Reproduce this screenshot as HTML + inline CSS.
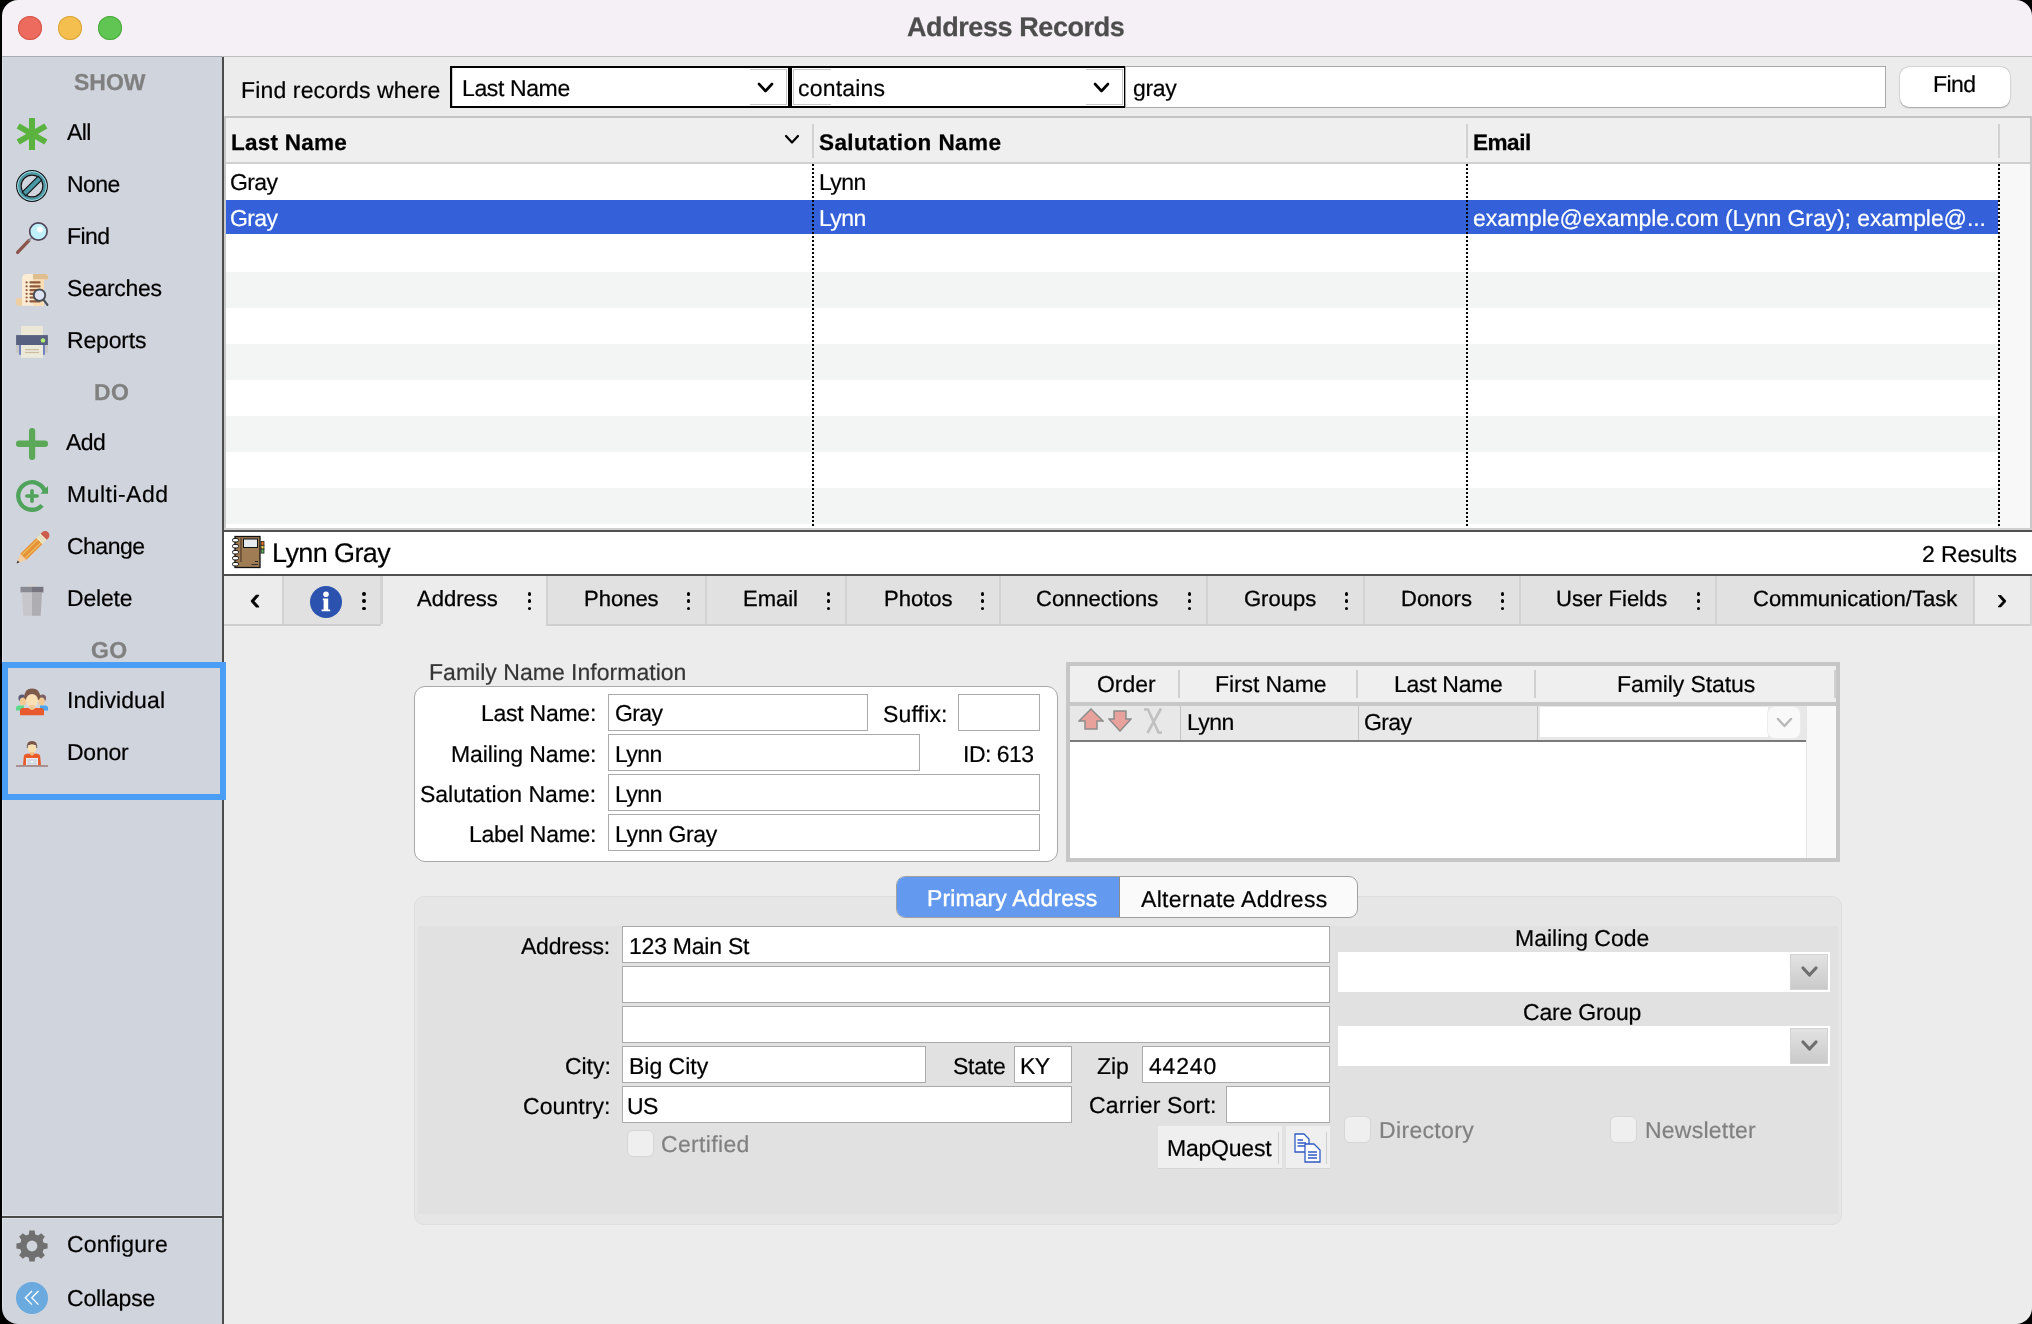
<!DOCTYPE html>
<html><head><meta charset="utf-8"><style>
html,body{margin:0;padding:0;}
body{width:2032px;height:1324px;background:#000;position:relative;overflow:hidden;font-family:"Liberation Sans",sans-serif;text-rendering:geometricPrecision;}
.t{position:absolute;white-space:pre;will-change:transform;}
.r{position:absolute;}
</style></head><body>
<div class="r" style="left:2px;top:0px;width:2030px;height:56px;background:#f5f0f6;border-radius:16px 16px 0 0;"></div>
<div class="r" style="left:2px;top:56px;width:220px;height:1px;background:#a6acb6;"></div>
<div class="r" style="left:222px;top:56px;width:1810px;height:1px;background:#bdbdbd;"></div>
<div class="r" style="left:18px;top:16px;width:24px;height:24px;background:#ed6a5e;border-radius:50%;box-shadow:inset 0 0 0 1px #d4574b;"></div>
<div class="r" style="left:58px;top:16px;width:24px;height:24px;background:#f4bf4f;border-radius:50%;box-shadow:inset 0 0 0 1px #d9a53a;"></div>
<div class="r" style="left:98px;top:16px;width:24px;height:24px;background:#61c554;border-radius:50%;box-shadow:inset 0 0 0 1px #4ea93f;"></div>
<div class="t" style="left:907.20px;top:14px;font-size:27px;line-height:27px;font-weight:700;color:#4d4d4d;letter-spacing:-0.413px;-webkit-text-stroke:0.25px #4d4d4d;">Address Records</div>
<div class="r" style="left:2px;top:57px;width:220px;height:1267px;background:#d0d4dd;border-radius:0 0 0 16px;"></div>
<div class="r" style="left:222px;top:57px;width:2px;height:1267px;background:#4b4b4b;"></div>
<div class="r" style="left:224px;top:57px;width:1808px;height:1267px;background:#ececec;border-radius:0 0 16px 0;"></div>
<div class="t" style="left:73.62px;top:71px;font-size:23px;line-height:23px;font-weight:700;color:#808080;letter-spacing:0.000px;-webkit-text-stroke:0.25px #808080;">SHOW</div>
<div class="t" style="left:93.60px;top:381px;font-size:23px;line-height:23px;font-weight:700;color:#808080;letter-spacing:0.300px;-webkit-text-stroke:0.25px #808080;">DO</div>
<div class="t" style="left:90.96px;top:639px;font-size:23px;line-height:23px;font-weight:700;color:#808080;letter-spacing:0.300px;-webkit-text-stroke:0.25px #808080;">GO</div>
<div class="t" style="left:66.62px;top:121px;font-size:23px;line-height:23px;font-weight:400;color:#000;letter-spacing:-0.600px;-webkit-text-stroke:0.20px #000;">All</div>
<div class="t" style="left:66.71px;top:173px;font-size:23px;line-height:23px;font-weight:400;color:#000;letter-spacing:-0.600px;-webkit-text-stroke:0.20px #000;">None</div>
<div class="t" style="left:66.88px;top:225px;font-size:23px;line-height:23px;font-weight:400;color:#000;letter-spacing:-0.600px;-webkit-text-stroke:0.20px #000;">Find</div>
<div class="t" style="left:67.00px;top:277px;font-size:23px;line-height:23px;font-weight:400;color:#000;letter-spacing:-0.310px;-webkit-text-stroke:0.20px #000;">Searches</div>
<div class="t" style="left:67.00px;top:329px;font-size:23px;line-height:23px;font-weight:400;color:#000;letter-spacing:-0.188px;-webkit-text-stroke:0.20px #000;">Reports</div>
<div class="t" style="left:66.49px;top:431px;font-size:23px;line-height:23px;font-weight:400;color:#000;letter-spacing:-0.600px;-webkit-text-stroke:0.20px #000;">Add</div>
<div class="t" style="left:67.00px;top:483px;font-size:23px;line-height:23px;font-weight:400;color:#000;letter-spacing:0.482px;-webkit-text-stroke:0.20px #000;">Multi-Add</div>
<div class="t" style="left:67.00px;top:535px;font-size:23px;line-height:23px;font-weight:400;color:#000;letter-spacing:-0.514px;-webkit-text-stroke:0.20px #000;">Change</div>
<div class="t" style="left:67.00px;top:587px;font-size:23px;line-height:23px;font-weight:400;color:#000;letter-spacing:-0.176px;-webkit-text-stroke:0.20px #000;">Delete</div>
<div class="t" style="left:67.00px;top:689px;font-size:23px;line-height:23px;font-weight:400;color:#000;letter-spacing:0.091px;-webkit-text-stroke:0.20px #000;">Individual</div>
<div class="t" style="left:67.00px;top:741px;font-size:23px;line-height:23px;font-weight:400;color:#000;letter-spacing:-0.235px;-webkit-text-stroke:0.20px #000;">Donor</div>
<div class="t" style="left:67.00px;top:1233px;font-size:23px;line-height:23px;font-weight:400;color:#000;letter-spacing:0.121px;-webkit-text-stroke:0.20px #000;">Configure</div>
<div class="t" style="left:67.00px;top:1287px;font-size:23px;line-height:23px;font-weight:400;color:#000;letter-spacing:-0.171px;-webkit-text-stroke:0.20px #000;">Collapse</div>
<div class="r" style="left:2px;top:57px;width:1px;height:1250px;background:#dde1e8;"></div>
<div class="r" style="left:3px;top:1215px;width:219px;height:1px;background:#dde1e8;"></div>
<div class="r" style="left:3px;top:1218px;width:219px;height:1px;background:#dde1e8;"></div>
<div class="r" style="left:2px;top:1216px;width:220px;height:2px;background:#4a4a48;"></div>
<div class="r" style="left:2px;top:662px;width:224px;height:138px;box-sizing:border-box;border:6px solid #4a9ef6;"></div>
<div class="t" style="left:240.70px;top:79px;font-size:23px;line-height:23px;font-weight:400;color:#000;letter-spacing:0.144px;-webkit-text-stroke:0.20px #000;">Find records where</div>
<div class="r" style="left:450px;top:66px;width:340px;height:42px;box-sizing:border-box;border:2px solid #000;background:#fff;"></div>
<div class="r" style="left:452px;top:68px;width:1px;height:38px;background:#cfcfcf;"></div>
<div class="r" style="left:750px;top:69px;width:37px;height:36px;box-sizing:border-box;border:1px solid #c8c8c8;border-left:none;"></div>
<div class="r" style="left:790px;top:66px;width:336px;height:42px;box-sizing:border-box;border:2px solid #000;background:#fff;"></div>
<div class="r" style="left:793px;top:69px;width:38px;height:36px;box-sizing:border-box;border-left:1px solid #c8c8c8;border-top:1px solid #c8c8c8;border-bottom:1px solid #c8c8c8;"></div>
<div class="r" style="left:1086px;top:69px;width:37px;height:36px;box-sizing:border-box;border:1px solid #c8c8c8;border-left:none;"></div>
<div class="t" style="left:461.70px;top:77px;font-size:23px;line-height:23px;font-weight:400;color:#000;letter-spacing:-0.378px;-webkit-text-stroke:0.20px #000;">Last Name</div>
<div class="t" style="left:798.30px;top:77px;font-size:23px;line-height:23px;font-weight:400;color:#000;letter-spacing:0.204px;-webkit-text-stroke:0.20px #000;">contains</div>
<div class="r" style="left:1125px;top:66px;width:761px;height:42px;box-sizing:border-box;border:1px solid #a8a8a8;background:#fff;"></div>
<div class="t" style="left:1132.80px;top:77px;font-size:23px;line-height:23px;font-weight:400;color:#000;letter-spacing:-0.347px;-webkit-text-stroke:0.20px #000;">gray</div>
<svg class="r" style="left:755.5px;top:80.5px" width="19.0" height="13.0"><polyline points="3,3 9.5,10.0 16.0,3" fill="none" stroke="#000" stroke-width="2.6" stroke-linecap="round" stroke-linejoin="round"/></svg>
<svg class="r" style="left:1091.5px;top:80.5px" width="19.0" height="13.0"><polyline points="3,3 9.5,10.0 16.0,3" fill="none" stroke="#000" stroke-width="2.6" stroke-linecap="round" stroke-linejoin="round"/></svg>
<div class="r" style="left:1900px;top:67px;width:110px;height:40px;background:#fff;border-radius:9px;box-shadow:0 0 0 0.5px rgba(0,0,0,0.10), 0 0.5px 1.5px rgba(0,0,0,0.28);"></div>
<div class="t" style="left:1932.98px;top:73px;font-size:23px;line-height:23px;font-weight:400;color:#000;letter-spacing:-0.600px;-webkit-text-stroke:0.20px #000;">Find</div>
<div class="r" style="left:224px;top:116px;width:1808px;height:2px;background:#c4c4c4;"></div>
<div class="r" style="left:224px;top:118px;width:1806px;height:412px;background:#fff;"></div>
<div class="r" style="left:224px;top:118px;width:2px;height:412px;background:#c8c8c8;"></div>
<div class="r" style="left:2030px;top:118px;width:2px;height:412px;background:#c8c8c8;"></div>
<div class="r" style="left:226px;top:118px;width:1804px;height:44px;background:#efefef;"></div>
<div class="r" style="left:226px;top:162px;width:1804px;height:2px;background:#d0d0d0;"></div>
<div class="r" style="left:226px;top:272px;width:1772px;height:36px;background:#f3f4f4;"></div>
<div class="r" style="left:226px;top:344px;width:1772px;height:36px;background:#f3f4f4;"></div>
<div class="r" style="left:226px;top:416px;width:1772px;height:36px;background:#f3f4f4;"></div>
<div class="r" style="left:226px;top:488px;width:1772px;height:36px;background:#f3f4f4;"></div>
<div class="r" style="left:1998px;top:164px;width:32px;height:364px;background:#f8f8f8;border-left:1px solid #ececec;box-sizing:border-box;"></div>
<div class="r" style="left:226px;top:200px;width:1772px;height:34px;background:#3461d9;"></div>
<div class="r" style="left:812px;top:124px;width:2px;height:34px;background:#d2d2d2;"></div>
<div class="r" style="left:1466px;top:124px;width:2px;height:34px;background:#d2d2d2;"></div>
<div class="r" style="left:1998px;top:124px;width:2px;height:34px;background:#d2d2d2;"></div>
<svg class="r" style="left:783px;top:132.5px" width="18" height="12.5"><polyline points="3,3 9.0,9.5 15,3" fill="none" stroke="#000" stroke-width="2.2" stroke-linecap="round" stroke-linejoin="round"/></svg>
<div class="t" style="left:231.30px;top:132px;font-size:22.5px;line-height:22.5px;font-weight:700;color:#000;letter-spacing:0.237px;-webkit-text-stroke:0.25px #000;">Last Name</div>
<div class="t" style="left:818.90px;top:132px;font-size:22.5px;line-height:22.5px;font-weight:700;color:#000;letter-spacing:0.401px;-webkit-text-stroke:0.25px #000;">Salutation Name</div>
<div class="t" style="left:1472.70px;top:132px;font-size:22.5px;line-height:22.5px;font-weight:700;color:#000;letter-spacing:-0.457px;-webkit-text-stroke:0.25px #000;">Email</div>
<div class="r" style="left:812px;top:164px;width:2px;height:364px;background-image:repeating-linear-gradient(to bottom,#000 0,#000 2px,transparent 2px,transparent 4px);"></div>
<div class="r" style="left:1466px;top:164px;width:2px;height:364px;background-image:repeating-linear-gradient(to bottom,#000 0,#000 2px,transparent 2px,transparent 4px);"></div>
<div class="r" style="left:1998px;top:164px;width:2px;height:364px;background-image:repeating-linear-gradient(to bottom,#000 0,#000 2px,transparent 2px,transparent 4px);"></div>
<div class="t" style="left:230.28px;top:171px;font-size:23px;line-height:23px;font-weight:400;color:#000;letter-spacing:-0.600px;-webkit-text-stroke:0.20px #000;">Gray</div>
<div class="t" style="left:818.99px;top:171px;font-size:23px;line-height:23px;font-weight:400;color:#000;letter-spacing:-0.600px;-webkit-text-stroke:0.20px #000;">Lynn</div>
<div class="t" style="left:230.28px;top:207px;font-size:23px;line-height:23px;font-weight:400;color:#fff;letter-spacing:-0.600px;-webkit-text-stroke:0.20px #fff;">Gray</div>
<div class="t" style="left:818.99px;top:207px;font-size:23px;line-height:23px;font-weight:400;color:#fff;letter-spacing:-0.600px;-webkit-text-stroke:0.20px #fff;">Lynn</div>
<div class="t" style="left:1472.70px;top:207px;font-size:23px;line-height:23px;font-weight:400;color:#fff;letter-spacing:-0.078px;-webkit-text-stroke:0.20px #fff;">example@example.com (Lynn Gray); example@...</div>
<div class="r" style="left:224px;top:528px;width:1808px;height:2px;background:#d0d0d0;"></div>
<div class="r" style="left:224px;top:530px;width:1808px;height:2px;background:#505050;"></div>
<div class="r" style="left:224px;top:532px;width:1808px;height:42px;background:#fff;"></div>
<div class="r" style="left:224px;top:574px;width:1808px;height:2px;background:#505050;"></div>
<div class="t" style="left:272.27px;top:540px;font-size:27px;line-height:27px;font-weight:400;color:#000;letter-spacing:-0.600px;-webkit-text-stroke:0.20px #000;">Lynn Gray</div>
<div class="t" style="left:1922.40px;top:543px;font-size:23px;line-height:23px;font-weight:400;color:#000;letter-spacing:-0.121px;-webkit-text-stroke:0.20px #000;">2 Results</div>
<div class="r" style="left:224px;top:576px;width:1808px;height:48px;background:#e1e1e1;"></div>
<div class="r" style="left:224px;top:576px;width:58px;height:48px;background:#ececec;"></div>
<div class="r" style="left:224px;top:624px;width:1808px;height:2px;background:#cfcfcf;"></div>
<div class="r" style="left:2030px;top:576px;width:2px;height:50px;background:#d4d4d4;"></div>
<div class="r" style="left:282px;top:576px;width:2px;height:48px;background:#d2d2d2;"></div>
<div class="r" style="left:380px;top:576px;width:2px;height:48px;background:#d2d2d2;"></div>
<div class="r" style="left:1973px;top:576px;width:2px;height:48px;background:#d2d2d2;"></div>
<div class="r" style="left:1975px;top:576px;width:55px;height:48px;background:#ececec;"></div>
<div class="r" style="left:381px;top:576px;width:165px;height:50px;background:#ececec;"></div>
<div class="r" style="left:381px;top:576px;width:2px;height:48px;background:#d2d2d2;"></div>
<div class="t" style="left:417.40px;top:588px;font-size:22px;line-height:22px;font-weight:400;color:#000;letter-spacing:0.000px;-webkit-text-stroke:0.30px #000;">Address</div>
<div class="r" style="left:527.6px;top:592.1px;width:3.8px;height:3.8px;background:#000;border-radius:50%;"></div>
<div class="r" style="left:527.6px;top:599.4px;width:3.8px;height:3.8px;background:#000;border-radius:50%;"></div>
<div class="r" style="left:527.6px;top:606.6px;width:3.8px;height:3.8px;background:#000;border-radius:50%;"></div>
<div class="r" style="left:546px;top:576px;width:2px;height:48px;background:#d2d2d2;"></div>
<div class="t" style="left:583.60px;top:588px;font-size:22px;line-height:22px;font-weight:400;color:#000;letter-spacing:0.000px;-webkit-text-stroke:0.30px #000;">Phones</div>
<div class="r" style="left:686.6px;top:592.1px;width:3.8px;height:3.8px;background:#000;border-radius:50%;"></div>
<div class="r" style="left:686.6px;top:599.4px;width:3.8px;height:3.8px;background:#000;border-radius:50%;"></div>
<div class="r" style="left:686.6px;top:606.6px;width:3.8px;height:3.8px;background:#000;border-radius:50%;"></div>
<div class="r" style="left:705px;top:576px;width:2px;height:48px;background:#d2d2d2;"></div>
<div class="t" style="left:743.30px;top:588px;font-size:22px;line-height:22px;font-weight:400;color:#000;letter-spacing:0.000px;-webkit-text-stroke:0.30px #000;">Email</div>
<div class="r" style="left:826.6px;top:592.1px;width:3.8px;height:3.8px;background:#000;border-radius:50%;"></div>
<div class="r" style="left:826.6px;top:599.4px;width:3.8px;height:3.8px;background:#000;border-radius:50%;"></div>
<div class="r" style="left:826.6px;top:606.6px;width:3.8px;height:3.8px;background:#000;border-radius:50%;"></div>
<div class="r" style="left:845px;top:576px;width:2px;height:48px;background:#d2d2d2;"></div>
<div class="t" style="left:883.50px;top:588px;font-size:22px;line-height:22px;font-weight:400;color:#000;letter-spacing:0.000px;-webkit-text-stroke:0.30px #000;">Photos</div>
<div class="r" style="left:980.6px;top:592.1px;width:3.8px;height:3.8px;background:#000;border-radius:50%;"></div>
<div class="r" style="left:980.6px;top:599.4px;width:3.8px;height:3.8px;background:#000;border-radius:50%;"></div>
<div class="r" style="left:980.6px;top:606.6px;width:3.8px;height:3.8px;background:#000;border-radius:50%;"></div>
<div class="r" style="left:999px;top:576px;width:2px;height:48px;background:#d2d2d2;"></div>
<div class="t" style="left:1036.40px;top:588px;font-size:22px;line-height:22px;font-weight:400;color:#000;letter-spacing:0.000px;-webkit-text-stroke:0.30px #000;">Connections</div>
<div class="r" style="left:1187.6px;top:592.1px;width:3.8px;height:3.8px;background:#000;border-radius:50%;"></div>
<div class="r" style="left:1187.6px;top:599.4px;width:3.8px;height:3.8px;background:#000;border-radius:50%;"></div>
<div class="r" style="left:1187.6px;top:606.6px;width:3.8px;height:3.8px;background:#000;border-radius:50%;"></div>
<div class="r" style="left:1206px;top:576px;width:2px;height:48px;background:#d2d2d2;"></div>
<div class="t" style="left:1243.90px;top:588px;font-size:22px;line-height:22px;font-weight:400;color:#000;letter-spacing:0.000px;-webkit-text-stroke:0.30px #000;">Groups</div>
<div class="r" style="left:1344.6px;top:592.1px;width:3.8px;height:3.8px;background:#000;border-radius:50%;"></div>
<div class="r" style="left:1344.6px;top:599.4px;width:3.8px;height:3.8px;background:#000;border-radius:50%;"></div>
<div class="r" style="left:1344.6px;top:606.6px;width:3.8px;height:3.8px;background:#000;border-radius:50%;"></div>
<div class="r" style="left:1363px;top:576px;width:2px;height:48px;background:#d2d2d2;"></div>
<div class="t" style="left:1400.90px;top:588px;font-size:22px;line-height:22px;font-weight:400;color:#000;letter-spacing:0.000px;-webkit-text-stroke:0.30px #000;">Donors</div>
<div class="r" style="left:1500.6px;top:592.1px;width:3.8px;height:3.8px;background:#000;border-radius:50%;"></div>
<div class="r" style="left:1500.6px;top:599.4px;width:3.8px;height:3.8px;background:#000;border-radius:50%;"></div>
<div class="r" style="left:1500.6px;top:606.6px;width:3.8px;height:3.8px;background:#000;border-radius:50%;"></div>
<div class="r" style="left:1519px;top:576px;width:2px;height:48px;background:#d2d2d2;"></div>
<div class="t" style="left:1555.50px;top:588px;font-size:22px;line-height:22px;font-weight:400;color:#000;letter-spacing:0.000px;-webkit-text-stroke:0.30px #000;">User Fields</div>
<div class="r" style="left:1696.6px;top:592.1px;width:3.8px;height:3.8px;background:#000;border-radius:50%;"></div>
<div class="r" style="left:1696.6px;top:599.4px;width:3.8px;height:3.8px;background:#000;border-radius:50%;"></div>
<div class="r" style="left:1696.6px;top:606.6px;width:3.8px;height:3.8px;background:#000;border-radius:50%;"></div>
<div class="r" style="left:1715px;top:576px;width:2px;height:48px;background:#d2d2d2;"></div>
<div class="t" style="left:1752.60px;top:588px;font-size:22px;line-height:22px;font-weight:400;color:#000;letter-spacing:0.000px;-webkit-text-stroke:0.30px #000;">Communication/Task</div>
<div class="r" style="left:362.1px;top:592.1px;width:3.8px;height:3.8px;background:#000;border-radius:50%;"></div>
<div class="r" style="left:362.1px;top:599.4px;width:3.8px;height:3.8px;background:#000;border-radius:50%;"></div>
<div class="r" style="left:362.1px;top:606.6px;width:3.8px;height:3.8px;background:#000;border-radius:50%;"></div>
<div class="t" style="left:250.00px;top:585px;font-size:30px;line-height:30px;font-weight:400;color:#000;letter-spacing:0.000px;-webkit-text-stroke:0.90px #000;">‹</div>
<div class="t" style="left:1997.40px;top:585px;font-size:30px;line-height:30px;font-weight:400;color:#000;letter-spacing:0.000px;-webkit-text-stroke:0.70px #000;">›</div>
<svg class="r" style="left:310px;top:586px" width="32" height="32"><circle cx="16" cy="16" r="16" fill="#2a52ae"/><circle cx="16" cy="8.3" r="2.8" fill="#fff"/><path d="M12.8 12.5 H18.2 V23.5 H20.2 V25.3 H11.6 V23.5 H13.6 V14.3 H12.8 Z" fill="#fff"/></svg>
<div class="t" style="left:429.40px;top:661px;font-size:23px;line-height:23px;font-weight:400;color:#353535;letter-spacing:0.022px;-webkit-text-stroke:0.20px #353535;">Family Name Information</div>
<div class="r" style="left:414px;top:686px;width:644px;height:176px;box-sizing:border-box;border:1px solid #a9a9a9;border-radius:11px;background:#fff;"></div>
<div class="r" style="left:608px;top:694px;width:260px;height:37px;box-sizing:border-box;border:1px solid #aaaaaa;background:#fff;"></div>
<div class="r" style="left:958px;top:694px;width:82px;height:37px;box-sizing:border-box;border:1px solid #aaaaaa;background:#fff;"></div>
<div class="r" style="left:608px;top:734px;width:312px;height:37px;box-sizing:border-box;border:1px solid #aaaaaa;background:#fff;"></div>
<div class="r" style="left:608px;top:774px;width:432px;height:37px;box-sizing:border-box;border:1px solid #aaaaaa;background:#fff;"></div>
<div class="r" style="left:608px;top:814px;width:432px;height:37px;box-sizing:border-box;border:1px solid #aaaaaa;background:#fff;"></div>
<div class="t" style="left:481.30px;top:702px;font-size:23px;line-height:23px;font-weight:400;color:#000;letter-spacing:-0.257px;-webkit-text-stroke:0.20px #000;">Last Name:</div>
<div class="t" style="left:451.10px;top:743px;font-size:23px;line-height:23px;font-weight:400;color:#000;letter-spacing:-0.125px;-webkit-text-stroke:0.20px #000;">Mailing Name:</div>
<div class="t" style="left:420.40px;top:783px;font-size:23px;line-height:23px;font-weight:400;color:#000;letter-spacing:-0.015px;-webkit-text-stroke:0.20px #000;">Salutation Name:</div>
<div class="t" style="left:469.20px;top:823px;font-size:23px;line-height:23px;font-weight:400;color:#000;letter-spacing:-0.301px;-webkit-text-stroke:0.20px #000;">Label Name:</div>
<div class="t" style="left:614.53px;top:702px;font-size:23px;line-height:23px;font-weight:400;color:#000;letter-spacing:-0.600px;-webkit-text-stroke:0.20px #000;">Gray</div>
<div class="t" style="left:614.94px;top:743px;font-size:23px;line-height:23px;font-weight:400;color:#000;letter-spacing:-0.600px;-webkit-text-stroke:0.20px #000;">Lynn</div>
<div class="t" style="left:614.94px;top:783px;font-size:23px;line-height:23px;font-weight:400;color:#000;letter-spacing:-0.600px;-webkit-text-stroke:0.20px #000;">Lynn</div>
<div class="t" style="left:615.00px;top:823px;font-size:23px;line-height:23px;font-weight:400;color:#000;letter-spacing:-0.381px;-webkit-text-stroke:0.20px #000;">Lynn Gray</div>
<div class="t" style="left:883.00px;top:703px;font-size:23px;line-height:23px;font-weight:400;color:#000;letter-spacing:0.167px;-webkit-text-stroke:0.20px #000;">Suffix:</div>
<div class="t" style="left:963.30px;top:743px;font-size:23px;line-height:23px;font-weight:400;color:#000;letter-spacing:-0.510px;-webkit-text-stroke:0.20px #000;">ID: 613</div>
<div class="r" style="left:1066px;top:662px;width:774px;height:200px;box-sizing:border-box;border:4px solid #c6c6c6;background:#fff;"></div>
<div class="r" style="left:1070px;top:666px;width:766px;height:36px;background:#efefef;"></div>
<div class="r" style="left:1070px;top:702px;width:766px;height:4px;background:#c8c8c8;"></div>
<div class="r" style="left:1070px;top:706px;width:736px;height:34px;background:#e8e8e8;"></div>
<div class="r" style="left:1070px;top:740px;width:736px;height:2px;background:#7a7a7a;"></div>
<div class="r" style="left:1806px;top:706px;width:30px;height:152px;background:#f8f8f8;border-left:1px solid #e6e6e6;box-sizing:border-box;"></div>
<div class="r" style="left:1178px;top:670px;width:2px;height:28px;background:#d0d0d0;"></div>
<div class="r" style="left:1356px;top:670px;width:2px;height:28px;background:#d0d0d0;"></div>
<div class="r" style="left:1534px;top:670px;width:2px;height:28px;background:#d0d0d0;"></div>
<div class="r" style="left:1834px;top:670px;width:2px;height:28px;background:#d0d0d0;"></div>
<div class="r" style="left:1180px;top:706px;width:1px;height:34px;background:#c4c4c4;"></div>
<div class="r" style="left:1358px;top:706px;width:1px;height:34px;background:#c4c4c4;"></div>
<div class="r" style="left:1537px;top:706px;width:1px;height:34px;background:#c4c4c4;"></div>
<div class="t" style="left:1096.90px;top:673px;font-size:23px;line-height:23px;font-weight:400;color:#000;letter-spacing:-0.048px;-webkit-text-stroke:0.20px #000;">Order</div>
<div class="t" style="left:1214.70px;top:673px;font-size:23px;line-height:23px;font-weight:400;color:#000;letter-spacing:-0.094px;-webkit-text-stroke:0.20px #000;">First Name</div>
<div class="t" style="left:1393.60px;top:673px;font-size:23px;line-height:23px;font-weight:400;color:#000;letter-spacing:-0.302px;-webkit-text-stroke:0.20px #000;">Last Name</div>
<div class="t" style="left:1616.80px;top:673px;font-size:23px;line-height:23px;font-weight:400;color:#000;letter-spacing:-0.092px;-webkit-text-stroke:0.20px #000;">Family Status</div>
<div class="t" style="left:1187.24px;top:711px;font-size:23px;line-height:23px;font-weight:400;color:#000;letter-spacing:-0.600px;-webkit-text-stroke:0.20px #000;">Lynn</div>
<div class="t" style="left:1364.38px;top:711px;font-size:23px;line-height:23px;font-weight:400;color:#000;letter-spacing:-0.600px;-webkit-text-stroke:0.20px #000;">Gray</div>
<div class="r" style="left:1540px;top:707px;width:228px;height:30px;background:#fff;"></div>
<div class="r" style="left:1768px;top:707px;width:32px;height:31px;background:#f9f9f9;border-radius:7px;box-shadow:0 0 0 1px #ececec;"></div>
<svg class="r" style="left:1774.5px;top:716px" width="19.0" height="13"><polyline points="3,3 9.5,10 16.0,3" fill="none" stroke="#b8b8b8" stroke-width="2.4" stroke-linecap="round" stroke-linejoin="round"/></svg>
<svg class="r" style="left:1078px;top:708px" width="26" height="22"><path d="M13 1 L25 13 L19 13 L19 21 L7 21 L7 13 L1 13 Z" fill="#e8a19b" stroke="#8c8c8c" stroke-width="1.5"/></svg>
<svg class="r" style="left:1108px;top:710px" width="24" height="22"><path d="M6 1 L18 1 L18 9 L23 9 L12 21 L1 9 L6 9 Z" fill="#e8a19b" stroke="#8c8c8c" stroke-width="1.5"/></svg>
<svg class="r" style="left:1142px;top:706px" width="24" height="30"><path d="M2 3.5 H6 L16.5 26.5 H20 M19 2.5 L5.5 27" fill="none" stroke="#c0c0c0" stroke-width="2.6"/></svg>
<div class="r" style="left:414px;top:896px;width:1428px;height:329px;box-sizing:border-box;border:1px solid #dedede;border-radius:10px;background:#e6e6e6;"></div>
<div class="r" style="left:418px;top:926px;width:1420px;height:288px;background:#e1e1e1;"></div>
<div class="r" style="left:896px;top:876px;width:462px;height:42px;box-sizing:border-box;border:1px solid #a0a0a0;border-radius:9px;background:#fafafa;overflow:hidden;"></div>
<div class="r" style="left:897px;top:877px;width:222px;height:40px;background:#639af0;border-radius:8px 0 0 8px;"></div>
<div class="r" style="left:1119px;top:877px;width:1px;height:40px;background:#8a8a8a;"></div>
<div class="t" style="left:927.30px;top:887px;font-size:23px;line-height:23px;font-weight:400;color:#fff;letter-spacing:0.106px;-webkit-text-stroke:0.40px #fff;">Primary Address</div>
<div class="t" style="left:1140.70px;top:888px;font-size:23px;line-height:23px;font-weight:400;color:#000;letter-spacing:0.291px;-webkit-text-stroke:0.20px #000;">Alternate Address</div>
<div class="r" style="left:622px;top:926px;width:708px;height:37px;box-sizing:border-box;border:1px solid #aaaaaa;background:#fff;"></div>
<div class="r" style="left:622px;top:966px;width:708px;height:37px;box-sizing:border-box;border:1px solid #aaaaaa;background:#fff;"></div>
<div class="r" style="left:622px;top:1006px;width:708px;height:37px;box-sizing:border-box;border:1px solid #aaaaaa;background:#fff;"></div>
<div class="r" style="left:622px;top:1046px;width:304px;height:37px;box-sizing:border-box;border:1px solid #aaaaaa;background:#fff;"></div>
<div class="r" style="left:1014px;top:1046px;width:58px;height:37px;box-sizing:border-box;border:1px solid #aaaaaa;background:#fff;"></div>
<div class="r" style="left:1142px;top:1046px;width:188px;height:37px;box-sizing:border-box;border:1px solid #aaaaaa;background:#fff;"></div>
<div class="r" style="left:622px;top:1086px;width:450px;height:37px;box-sizing:border-box;border:1px solid #aaaaaa;background:#fff;"></div>
<div class="r" style="left:1226px;top:1086px;width:104px;height:37px;box-sizing:border-box;border:1px solid #aaaaaa;background:#fff;"></div>
<div class="t" style="left:521.30px;top:935px;font-size:23px;line-height:23px;font-weight:400;color:#000;letter-spacing:-0.223px;-webkit-text-stroke:0.20px #000;">Address:</div>
<div class="t" style="left:564.70px;top:1055px;font-size:23px;line-height:23px;font-weight:400;color:#000;letter-spacing:-0.050px;-webkit-text-stroke:0.20px #000;">City:</div>
<div class="t" style="left:523.00px;top:1095px;font-size:23px;line-height:23px;font-weight:400;color:#000;letter-spacing:0.083px;-webkit-text-stroke:0.20px #000;">Country:</div>
<div class="t" style="left:629.10px;top:935px;font-size:23px;line-height:23px;font-weight:400;color:#000;letter-spacing:-0.224px;-webkit-text-stroke:0.20px #000;">123 Main St</div>
<div class="t" style="left:629.10px;top:1055px;font-size:23px;line-height:23px;font-weight:400;color:#000;letter-spacing:-0.006px;-webkit-text-stroke:0.20px #000;">Big City</div>
<div class="t" style="left:1019.76px;top:1055px;font-size:23px;line-height:23px;font-weight:400;color:#000;letter-spacing:-0.600px;-webkit-text-stroke:0.20px #000;">KY</div>
<div class="t" style="left:1149.00px;top:1055px;font-size:23px;line-height:23px;font-weight:400;color:#000;letter-spacing:0.810px;-webkit-text-stroke:0.20px #000;">44240</div>
<div class="t" style="left:627.18px;top:1095px;font-size:23px;line-height:23px;font-weight:400;color:#000;letter-spacing:-0.600px;-webkit-text-stroke:0.20px #000;">US</div>
<div class="t" style="left:953.00px;top:1055px;font-size:23px;line-height:23px;font-weight:400;color:#000;letter-spacing:-0.250px;-webkit-text-stroke:0.20px #000;">State</div>
<div class="t" style="left:1097.00px;top:1055px;font-size:23px;line-height:23px;font-weight:400;color:#000;letter-spacing:-0.125px;-webkit-text-stroke:0.20px #000;">Zip</div>
<div class="t" style="left:1088.80px;top:1094px;font-size:23px;line-height:23px;font-weight:400;color:#000;letter-spacing:0.180px;-webkit-text-stroke:0.20px #000;">Carrier Sort:</div>
<div class="r" style="left:627px;top:1130px;width:27px;height:27px;box-sizing:border-box;border:1px solid #d6d6d6;border-radius:6px;background:#efefef;"></div>
<div class="t" style="left:660.80px;top:1133px;font-size:23px;line-height:23px;font-weight:400;color:#808080;letter-spacing:0.333px;-webkit-text-stroke:0.20px #808080;">Certified</div>
<div class="r" style="left:1344px;top:1116px;width:27px;height:27px;box-sizing:border-box;border:1px solid #d6d6d6;border-radius:6px;background:#efefef;"></div>
<div class="r" style="left:1610px;top:1116px;width:27px;height:27px;box-sizing:border-box;border:1px solid #d6d6d6;border-radius:6px;background:#efefef;"></div>
<div class="t" style="left:1379.10px;top:1119px;font-size:23px;line-height:23px;font-weight:400;color:#808080;letter-spacing:0.336px;-webkit-text-stroke:0.20px #808080;">Directory</div>
<div class="t" style="left:1645.30px;top:1119px;font-size:23px;line-height:23px;font-weight:400;color:#808080;letter-spacing:0.229px;-webkit-text-stroke:0.20px #808080;">Newsletter</div>
<div class="r" style="left:1158px;top:1126px;width:124px;height:43px;background:#efefef;border-bottom:1px solid #d4d4d4;box-sizing:border-box;"></div>
<div class="r" style="left:1278px;top:1132px;width:1px;height:32px;background:#cfcfcf;"></div>
<div class="t" style="left:1167.40px;top:1137px;font-size:23px;line-height:23px;font-weight:400;color:#000;letter-spacing:-0.216px;-webkit-text-stroke:0.20px #000;">MapQuest</div>
<div class="r" style="left:1286px;top:1126px;width:44px;height:43px;background:#efefef;border-bottom:1px solid #d4d4d4;box-sizing:border-box;"></div>
<div class="r" style="left:1326px;top:1132px;width:1px;height:32px;background:#cfcfcf;"></div>
<svg class="r" style="left:1294px;top:1133px" width="28" height="30"><path d="M1 1 H10 L15 6 V19 H1 Z" fill="#fff" stroke="#2f5bc4" stroke-width="1.3"/><path d="M3.5 7 H9 M3.5 10 H12 M3.5 13 H12" stroke="#2f5bc4" stroke-width="1.3"/><path d="M11 11 H20 L26 17 V29 H11 Z" fill="#fff" stroke="#2f5bc4" stroke-width="1.3"/><path d="M14 19 H23 M14 22 H23 M14 25 H23" stroke="#2f5bc4" stroke-width="1.3"/></svg>
<div class="t" style="left:1515.00px;top:927px;font-size:23px;line-height:23px;font-weight:400;color:#000;letter-spacing:0.015px;-webkit-text-stroke:0.20px #000;">Mailing Code</div>
<div class="t" style="left:1522.60px;top:1001px;font-size:23px;line-height:23px;font-weight:400;color:#000;letter-spacing:-0.208px;-webkit-text-stroke:0.20px #000;">Care Group</div>
<div class="r" style="left:1338px;top:952px;width:492px;height:40px;background:#fff;"></div>
<div class="r" style="left:1790px;top:954px;width:38px;height:36px;background:linear-gradient(#e3e3e3,#c9c9c9);box-shadow:inset 0 0 0 1px #d2d2d2;"></div>
<svg class="r" style="left:1799.5px;top:965px" width="19.0" height="13"><polyline points="3,3 9.5,10 16.0,3" fill="none" stroke="#6e6e6e" stroke-width="3.2" stroke-linecap="round" stroke-linejoin="round"/></svg>
<div class="r" style="left:1338px;top:1026px;width:492px;height:40px;background:#fff;"></div>
<div class="r" style="left:1790px;top:1028px;width:38px;height:36px;background:linear-gradient(#e3e3e3,#c9c9c9);box-shadow:inset 0 0 0 1px #d2d2d2;"></div>
<svg class="r" style="left:1799.5px;top:1039px" width="19.0" height="13"><polyline points="3,3 9.5,10 16.0,3" fill="none" stroke="#6e6e6e" stroke-width="3.2" stroke-linecap="round" stroke-linejoin="round"/></svg>
<svg class="r" style="left:12px;top:114px" width="40" height="40" viewBox="0 0 40 40"><rect x="-3" y="-16" width="6" height="32" fill="#5ab33e" transform="translate(20,20) rotate(0)"/><rect x="-3" y="-16" width="6" height="32" fill="#5ab33e" transform="translate(20,20) rotate(60)"/><rect x="-3" y="-16" width="6" height="32" fill="#5ab33e" transform="translate(20,20) rotate(120)"/></svg>
<svg class="r" style="left:12px;top:166px" width="40" height="40" viewBox="0 0 40 40"><circle cx="20" cy="20" r="15.3" fill="none" stroke="#101010" stroke-width="1.3"/><circle cx="20" cy="20" r="13.1" fill="none" stroke="#4a98a5" stroke-width="3.2"/><circle cx="20" cy="20" r="14.4" fill="none" stroke="#bff0f4" stroke-width="0.7"/><circle cx="20" cy="20" r="10.9" fill="none" stroke="#101010" stroke-width="1.2"/><rect x="-11.2" y="-2.6" width="22.4" height="5.2" fill="#4a98a5" stroke="#101010" stroke-width="1.1" transform="translate(20,20) rotate(-45)"/></svg>
<svg class="r" style="left:12px;top:216px" width="40" height="40" viewBox="0 0 40 40"><line x1="17.6" y1="252.4" x2="28.8" y2="240.6" stroke="#8a5548" stroke-width="3.3" stroke-linecap="round" transform="translate(-12,-216)"/><line x1="28.5" y1="240.9" x2="31.5" y2="237.8" stroke="#8c8c9a" stroke-width="1.4" transform="translate(-12,-216)"/><circle cx="26.4" cy="15.5" r="8.7" fill="#bfeff9" stroke="#50465a" stroke-width="1.7"/><circle cx="28" cy="13.6" r="3" fill="#fff"/></svg>
<svg class="r" style="left:12px;top:268px" width="40" height="40" viewBox="0 0 40 40"><path d="M10 11 Q10 6 15 6 L33 6 Q36 6 36 9 L36 11.6 L32 11.6 L32 37.8 L10 37.8 Z" fill="#fbebd3"/><path d="M21 6 L33 6 Q36 6 36 9 L36 11.6 L21 11.6 Z" fill="#dfbd8f"/><rect x="21" y="11.6" width="11" height="26.2" fill="#f9deb3"/><path d="M4 30.3 L10 30.3 L10 37.8 L7 37.8 Q4 37.8 4 34.8 Z" fill="#efcfa0"/><circle cx="14.6" cy="14.4" r="1.1" fill="#8e5a3f"/><rect x="17.4" y="13.3" width="11.2" height="2.2" rx="1" fill="#8e5a3f"/><circle cx="14.6" cy="18.3" r="1.1" fill="#8e5a3f"/><rect x="17.4" y="17.2" width="11.2" height="2.2" rx="1" fill="#8e5a3f"/><circle cx="14.6" cy="22.1" r="1.1" fill="#8e5a3f"/><rect x="17.4" y="21.0" width="11.2" height="2.2" rx="1" fill="#8e5a3f"/><circle cx="14.6" cy="25.8" r="1.1" fill="#8e5a3f"/><rect x="17.4" y="24.7" width="11.2" height="2.2" rx="1" fill="#8e5a3f"/><circle cx="14.6" cy="29.5" r="1.1" fill="#8e5a3f"/><rect x="17.4" y="28.4" width="11.2" height="2.2" rx="1" fill="#8e5a3f"/><circle cx="14.6" cy="33.3" r="1.1" fill="#8e5a3f"/><rect x="17.4" y="32.199999999999996" width="11.2" height="2.2" rx="1" fill="#8e5a3f"/><line x1="31.3" y1="31.3" x2="35.4" y2="36.8" stroke="#4a4e57" stroke-width="2.2" stroke-linecap="round"/><circle cx="27.5" cy="27.2" r="5.7" fill="#dde3f3" stroke="#4a4e57" stroke-width="1.9"/></svg>
<svg class="r" style="left:12px;top:320px" width="40" height="40" viewBox="0 0 40 40"><rect x="9.1" y="6" width="21.8" height="9.6" fill="#ebe8d8"/><rect x="4.1" y="15.1" width="31.8" height="9.9" fill="#576080"/><circle cx="31" cy="20.4" r="2.2" fill="#b5ef72"/><rect x="4.1" y="25" width="3" height="7.6" fill="#c8c9c4"/><rect x="33" y="25" width="3" height="7.6" fill="#c8c9c4"/><rect x="7" y="25" width="2" height="9.8" fill="#7080c0"/><rect x="31" y="25" width="2" height="9.8" fill="#7080c0"/><rect x="9.1" y="25" width="21.8" height="12.8" fill="#ecebdb"/><rect x="13" y="29" width="14" height="1.2" fill="#c9bfa0"/><rect x="13" y="31.9" width="14" height="1.2" fill="#c9bfa0"/></svg>
<svg class="r" style="left:12px;top:424px" width="40" height="40" viewBox="0 0 40 40"><rect x="4" y="16.5" width="32" height="6.4" rx="3" fill="#5aa858"/><rect x="17" y="4" width="6.2" height="32" rx="3" fill="#5aa858"/></svg>
<svg class="r" style="left:12px;top:474px" width="40" height="40" viewBox="0 0 40 40"><path d="M33.22 18.21 A13.75 13.75 0 1 0 30.06 31.38" fill="none" stroke="#4fa35a" stroke-width="4.3"/><path d="M28.3 19.7 L36 19.7 L36 12 Z" fill="#4fa35a"/><rect x="13" y="20.2" width="14" height="3.6" rx="1.8" fill="#4fa35a"/><rect x="18.2" y="15" width="3.6" height="14" rx="1.8" fill="#4fa35a"/></svg>
<svg class="r" style="left:12px;top:526px" width="40" height="40" viewBox="0 0 40 40"><g transform="translate(4.6,37.4) rotate(-44.53)"><path d="M0 0 L9.5 -4.3 L9.5 4.3 Z" fill="#f6cda0"/><path d="M0 0 L2.8 -1.3 L2.8 1.3 Z" fill="#2e2e36"/><rect x="9.5" y="-4.3" width="22.5" height="8.6" fill="#e8913b"/><path d="M9.5 -2.2 L32 -2.2 M9.5 2.2 L32 2.2" stroke="#e7c55a" stroke-width="1.1"/><rect x="32" y="-4.3" width="6" height="8.6" fill="#efeac4"/><path d="M34 -4.3 L34 4.3 M36 -4.3 L36 4.3" stroke="#c9c9c0" stroke-width="0.8"/><path d="M38 -4.3 L40 -4.3 A4.3 4.3 0 0 1 40 4.3 L38 4.3 Z" fill="#cd5c4a"/></g></svg>
<svg class="r" style="left:12px;top:578px" width="40" height="40" viewBox="0 0 40 40"><rect x="15.7" y="6" width="8.8" height="2.8" fill="#d4d4d6"/><rect x="8.5" y="8.8" width="11.5" height="5.7" fill="#8a8a92"/><rect x="20" y="8.8" width="11.4" height="5.7" fill="#76757f"/><path d="M10 14.5 L20 14.5 L20 37.8 L11.3 37.8 Z" fill="#c7c6cb"/><path d="M20 14.5 L30 14.5 L28.7 37.8 L20 37.8 Z" fill="#aeadb2"/></svg>
<svg class="r" style="left:0px;top:640px" width="60" height="80" viewBox="0 0 60 80"><g><ellipse cx="22" cy="58" rx="3.6" ry="3.5" fill="#5a5a78"/><ellipse cx="23" cy="61.5" rx="3.3" ry="4" fill="#f3c994"/><path d="M16 70.5 L16 68 Q16 65.5 19 65.5 L24 65.5 L24 70.5 Z" fill="#5ed88a"/><ellipse cx="42.5" cy="58" rx="3.6" ry="3.5" fill="#7a6068"/><ellipse cx="41.5" cy="61.5" rx="3.3" ry="4" fill="#f3c994"/><path d="M40 65.5 L45 65.5 Q48 65.5 48 68 L48 70.5 L40 70.5 Z" fill="#4aa4ef"/><path d="M24.2 58 Q24.2 48.6 32 48.6 Q40.2 48.6 40.2 58 L38.5 60 L26 60 Z" fill="#7d5a4a"/><ellipse cx="32" cy="60.5" rx="6" ry="6.6" fill="#f9e0b4"/><rect x="29.5" y="65" width="5" height="4" fill="#f3c994"/><path d="M20 75.2 L20 70.5 Q20 68 23 68 L41 68 Q44 68 44 70.5 L44 75.2 Z" fill="#e8592e"/><path d="M28.5 68 Q32 72 35.5 68 Z" fill="#f3c994"/></g></svg>
<svg class="r" style="left:12px;top:732px" width="40" height="40" viewBox="0 0 40 40"><path d="M14.8 16 Q14.3 9 20 9 Q25.7 9 25.3 16 L24.2 16 L24.2 13 L15.8 13 L15.8 16 Z" fill="#7a5446"/><ellipse cx="20" cy="16.6" rx="4.2" ry="4.4" fill="#f8e0b0"/><rect x="17.8" y="20" width="4.4" height="3.5" fill="#f3c994"/><path d="M11 33 L11.8 24.5 Q12.2 21.8 15 21.8 L25 21.8 Q27.8 21.8 28.2 24.5 L29 33 Z" fill="#ea5a2a"/><path d="M17.5 21.8 Q20 25 22.5 21.8 Z" fill="#f3c994"/><rect x="14" y="26" width="12" height="7" fill="#eef3f8"/><rect x="14.8" y="26.8" width="10.4" height="6.2" fill="#d5d9e0"/><rect x="19.2" y="29" width="1.7" height="1.6" fill="#fff"/><rect x="4" y="33" width="32" height="2" fill="#a89090"/></svg>
<svg class="r" style="left:12px;top:1225.8px" width="40" height="40" viewBox="0 0 40 40"><path d="M15.48 9.10 L16.75 8.66 L17.39 4.42 L22.61 4.42 L23.25 8.66 L24.52 9.10 L25.72 9.68 L29.18 7.14 L32.86 10.82 L30.32 14.28 L30.90 15.48 L31.34 16.75 L35.58 17.39 L35.58 22.61 L31.34 23.25 L30.90 24.52 L30.32 25.72 L32.86 29.18 L29.18 32.86 L25.72 30.32 L24.52 30.90 L23.25 31.34 L22.61 35.58 L17.39 35.58 L16.75 31.34 L15.48 30.90 L14.28 30.32 L10.82 32.86 L7.14 29.18 L9.68 25.72 L9.10 24.52 L8.66 23.25 L4.42 22.61 L4.42 17.39 L8.66 16.75 L9.10 15.48 L9.68 14.28 L7.14 10.82 L10.82 7.14 L14.28 9.68 Z" fill="#707070"/><circle cx="20" cy="20" r="12" fill="#707070"/><circle cx="20" cy="20" r="5.4" fill="#d0d4dd"/></svg>
<svg class="r" style="left:12px;top:1277.9px" width="40" height="40" viewBox="0 0 40 40"><circle cx="20" cy="20" r="16" fill="#6aaadf"/><path d="M20 13 L13.3 19.8 L20 26.6 M26.5 13 L19.8 19.8 L26.5 26.6" fill="none" stroke="#fff" stroke-width="1.3"/></svg>
<svg class="r" style="left:220px;top:500px" width="60" height="80" viewBox="0 0 60 80"><g transform="translate(-220,-500)"><rect x="235" y="536.5" width="25" height="31" fill="#a07c55" stroke="#111" stroke-width="1.3"/><rect x="261" y="541.5" width="3" height="3.8" fill="#e8742c" stroke="#111" stroke-width="0.7"/><rect x="261" y="545.3" width="3" height="3.8" fill="#f2d04a" stroke="#111" stroke-width="0.7"/><rect x="261" y="549.1" width="3" height="4" fill="#58b060" stroke="#111" stroke-width="0.7"/><rect x="243.5" y="539" width="14" height="8.5" fill="#e6eaee" stroke="#111" stroke-width="1"/><rect x="240.3" y="538" width="1.3" height="24" fill="#5a4030"/><rect x="255" y="561" width="3" height="1" fill="#222"/><rect x="251.5" y="564" width="6.5" height="1" fill="#333"/><rect x="232.5" y="538.5" width="6" height="3.4" rx="1.5" fill="#fff" stroke="#111" stroke-width="0.9"/><rect x="232.5" y="544.5" width="6" height="3.4" rx="1.5" fill="#fff" stroke="#111" stroke-width="0.9"/><rect x="232.5" y="550.5" width="6" height="3.4" rx="1.5" fill="#fff" stroke="#111" stroke-width="0.9"/><rect x="232.5" y="556.5" width="6" height="3.4" rx="1.5" fill="#fff" stroke="#111" stroke-width="0.9"/><rect x="232.5" y="562.5" width="6" height="3.4" rx="1.5" fill="#fff" stroke="#111" stroke-width="0.9"/></g></svg>
</body></html>
